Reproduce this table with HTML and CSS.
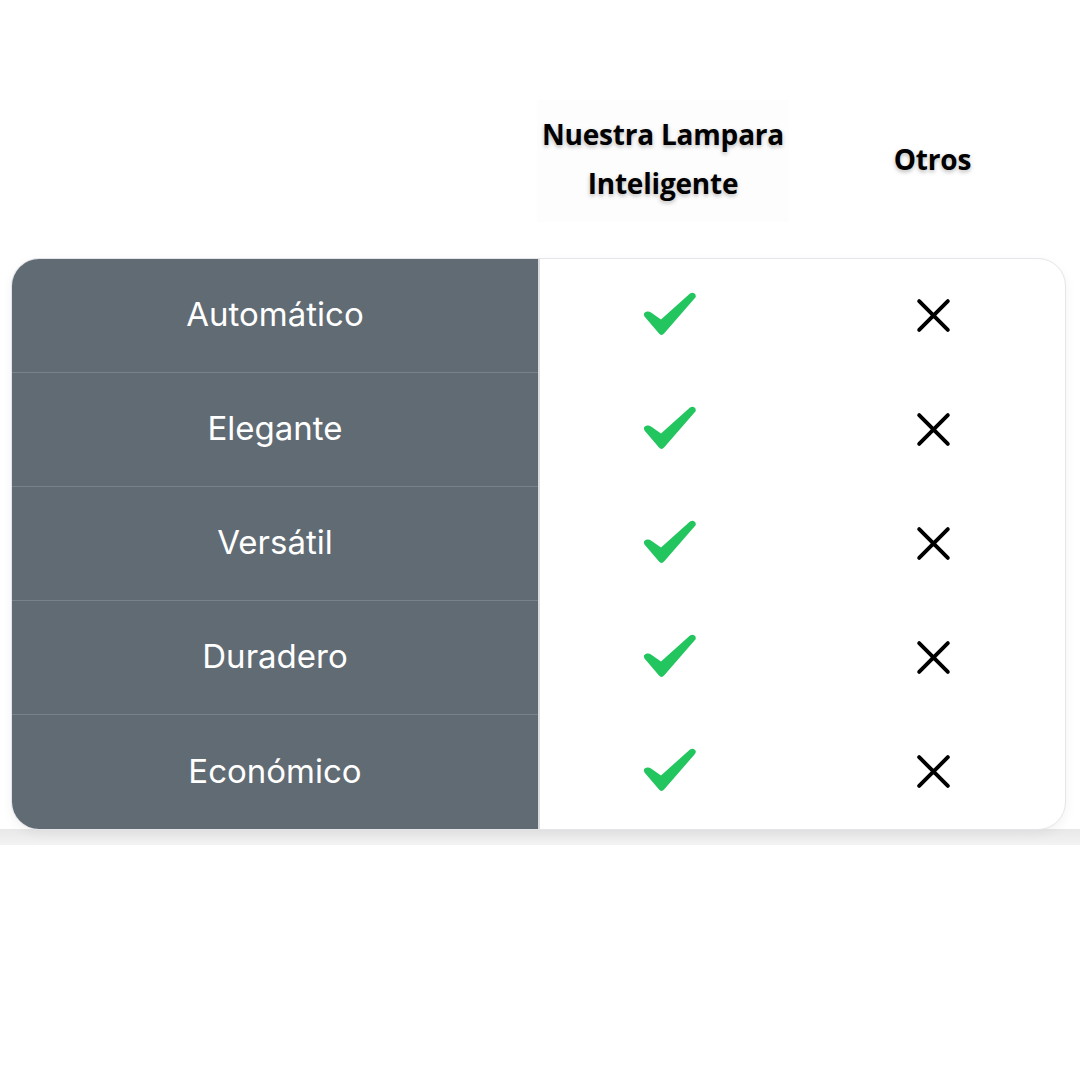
FILE: index.html
```html
<!DOCTYPE html>
<html lang="es">
<head>
<meta charset="utf-8">
<title>Comparativa</title>
<link rel="stylesheet" href="styles.css">
</head>
<body>
<div class="page">
  <div class="head">
    <div class="head-spacer"></div>
    <div class="head-cell head-ours">Nuestra Lampara<br>Inteligente</div>
    <div class="head-cell head-others">Otros</div>
  </div>
  <div class="stage">
    <div class="card">
      <div class="row">
        <div class="label">Automático</div>
        <div class="mark ours"><svg class="check" viewBox="0 0 66 54"><path d="M8.5 29.5 Q6.5 25.5 11 24.5 Q13 24 15 25.5 L25 32.5 L54 6.5 Q57.5 4.5 59.5 7.5 Q60.5 9.5 58.5 11.5 L28.5 46 Q25.5 49.5 23 46.5 Z"/></svg></div>
        <div class="mark"><svg class="cross" viewBox="0 0 40 40"><path d="M4.5 4.5 L35.5 35.5 M35.5 4.5 L4.5 35.5"/></svg></div>
      </div>
      <div class="row">
        <div class="label">Elegante</div>
        <div class="mark ours"><svg class="check" viewBox="0 0 66 54"><path d="M8.5 29.5 Q6.5 25.5 11 24.5 Q13 24 15 25.5 L25 32.5 L54 6.5 Q57.5 4.5 59.5 7.5 Q60.5 9.5 58.5 11.5 L28.5 46 Q25.5 49.5 23 46.5 Z"/></svg></div>
        <div class="mark"><svg class="cross" viewBox="0 0 40 40"><path d="M4.5 4.5 L35.5 35.5 M35.5 4.5 L4.5 35.5"/></svg></div>
      </div>
      <div class="row">
        <div class="label">Versátil</div>
        <div class="mark ours"><svg class="check" viewBox="0 0 66 54"><path d="M8.5 29.5 Q6.5 25.5 11 24.5 Q13 24 15 25.5 L25 32.5 L54 6.5 Q57.5 4.5 59.5 7.5 Q60.5 9.5 58.5 11.5 L28.5 46 Q25.5 49.5 23 46.5 Z"/></svg></div>
        <div class="mark"><svg class="cross" viewBox="0 0 40 40"><path d="M4.5 4.5 L35.5 35.5 M35.5 4.5 L4.5 35.5"/></svg></div>
      </div>
      <div class="row">
        <div class="label">Duradero</div>
        <div class="mark ours"><svg class="check" viewBox="0 0 66 54"><path d="M8.5 29.5 Q6.5 25.5 11 24.5 Q13 24 15 25.5 L25 32.5 L54 6.5 Q57.5 4.5 59.5 7.5 Q60.5 9.5 58.5 11.5 L28.5 46 Q25.5 49.5 23 46.5 Z"/></svg></div>
        <div class="mark"><svg class="cross" viewBox="0 0 40 40"><path d="M4.5 4.5 L35.5 35.5 M35.5 4.5 L4.5 35.5"/></svg></div>
      </div>
      <div class="row">
        <div class="label">Económico</div>
        <div class="mark ours"><svg class="check" viewBox="0 0 66 54"><path d="M8.5 29.5 Q6.5 25.5 11 24.5 Q13 24 15 25.5 L25 32.5 L54 6.5 Q57.5 4.5 59.5 7.5 Q60.5 9.5 58.5 11.5 L28.5 46 Q25.5 49.5 23 46.5 Z"/></svg></div>
        <div class="mark"><svg class="cross" viewBox="0 0 40 40"><path d="M4.5 4.5 L35.5 35.5 M35.5 4.5 L4.5 35.5"/></svg></div>
      </div>
    </div>
    <div class="strip"></div>
  </div>
</div>
</body>
</html>
```
FILE: styles.css
```css
* { box-sizing: border-box; }
html, body { margin: 0; padding: 0; background: #ffffff; }
.page {
  width: 1080px;
  height: 1080px;
  padding-top: 110px;
  overflow: hidden;
}
.head {
  display: grid;
  grid-template-columns: 537px 252px 1fr;
  height: 148px;
}
.head-cell {
  font-family: "Open Sans", "Liberation Sans", sans-serif;
  font-weight: 700;
  font-size: 28px;
  line-height: 49px;
  color: #000;
  text-align: center;
  text-shadow: 0 2px 4px rgba(0,0,0,0.28);
  letter-spacing: -0.2px;
}
.head-ours { background: #fdfdfd; margin-top: -10px; padding-top: 10px; height: 122px; }
.head-others { display: flex; align-items: center; justify-content: center; height: 98px; padding-right: 4px; }
.stage {
  display: flex;
  flex-direction: column;
}
.card {
  margin-left: 11px;
  width: 1055px;
  border: 1px solid #e4e4ea;
  border-radius: 28px;
  overflow: hidden;
  background: #ffffff;
  box-shadow: 0 4px 12px rgba(0,0,0,0.05);
  position: relative;
  z-index: 1;
}
.row {
  display: grid;
  grid-template-columns: 526px 1fr 1fr;
  height: 114px;
}
.label {
  background: #616b74;
  color: #ffffff;
  font-family: Inter, "Noto Sans", sans-serif;
  font-size: 33px;
  display: flex;
  align-items: center;
  justify-content: center;
  padding-bottom: 3px;
  border-bottom: 1px solid #78828b;
}
.row:last-child .label { border-bottom: none; }
.mark {
  display: flex;
  align-items: center;
  justify-content: center;
}
.mark.ours { border-left: 2px solid #dcdcdc; padding-right: 4px; }
.check { width: 66px; height: 54px; margin-top: -5px; }
.check path { fill: #22c55e; }
.cross { width: 37px; height: 37px; margin-top: -1px; }
.cross path { stroke: #000; stroke-width: 4.2; stroke-linecap: round; fill: none; }
.strip {
  height: 16px;
  margin-top: -1px;
  background: linear-gradient(to bottom, #e8e8e8, #f3f3f3);
}
```
